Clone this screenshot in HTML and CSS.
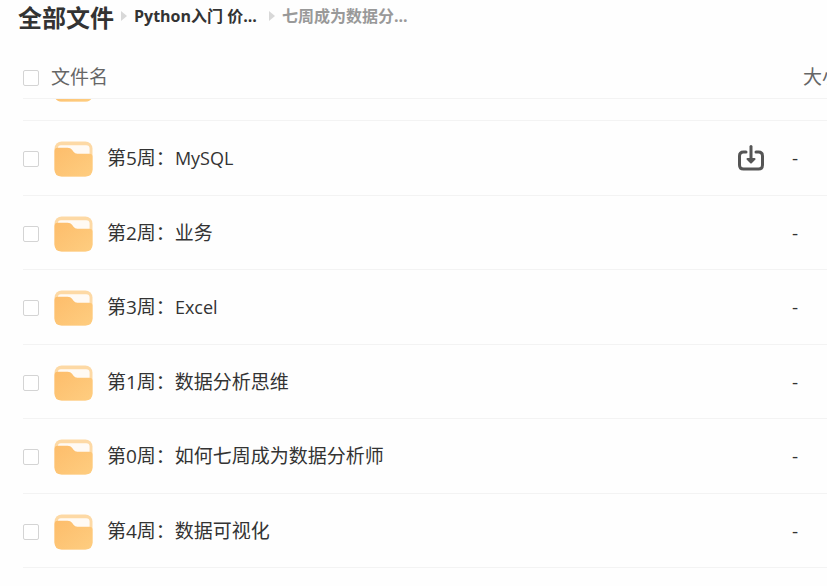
FILE: index.html
```html
<!DOCTYPE html>
<html lang="zh-CN">
<head>
    <meta charset="UTF-8">
    <meta name="viewport" content="width=device-width, initial-scale=1.0">
    <title>全部文件</title>
    <link rel="stylesheet" href="styles.css">
</head>
<body>
    <svg class="defs" width="0" height="0" aria-hidden="true">
        <defs>
            <linearGradient id="front" x1="0" y1="0" x2="1" y2="1">
                <stop offset="0" stop-color="#fdbd6b"/>
                <stop offset="1" stop-color="#fecd80"/>
            </linearGradient>
        </defs>
        <symbol id="folder" viewBox="0 0 40 38">
            <rect x="0.5" y="1" width="39" height="36" rx="7.5" fill="#fdd9a5"/>
            <path d="M4 13V8q0-3 3-3H33q3.500 0 3.500 3.500V16H4z" fill="#fffaf4"/>
            <path d="M0.500 11Q0.500 7.500 4 7.500H14Q17 7.500 18.500 9.500L20 11.500Q21.500 13.500 24 13.500H36.500Q39.500 13.500 39.500 16.500V29.500Q39.500 37 32 37H8Q0.500 37 0.500 29.500z" fill="url(#front)"/>
        </symbol>
    </svg>

    <nav class="breadcrumb">
        <a class="root" href="#">全部文件</a>
        <span class="arrow"></span>
        <a class="parent" href="#">Python入门 价...</a>
        <span class="arrow"></span>
        <span class="current">七周成为数据分...</span>
    </nav>

    <table class="files">
        <thead>
            <tr>
                <th class="check"><input type="checkbox" aria-label="全选"></th>
                <th class="title">文件名</th>
                <th class="size">大小</th>
            </tr>
        </thead>
        <tbody>
            <tr class="scrolled">
                <td class="icon"><svg class="folder"><use href="#folder"/></svg></td>
            </tr>
            <tr>
                <td class="check"><input type="checkbox" id="f5"></td>
                <td class="icon"><svg class="folder"><use href="#folder"/></svg></td>
                <td class="name"><label for="f5">第5周：<span class="latin">MySQL</span></label></td>
                <td class="action">
                    <button type="button" aria-label="下载">
                        <svg width="28" height="28" viewBox="0 0 28 28" fill="none" stroke="#555" stroke-width="3" stroke-linecap="round" stroke-linejoin="round">
                            <path d="M9 8H6.500Q2.500 8 2.500 12V21Q2.500 25 6.500 25H21.500Q25.500 25 25.500 21V12Q25.500 8 21.500 8H19"/>
                            <path d="M14 2.500V15"/>
                            <path d="M10.500 15H17.500L14 18.500z" fill="#555" stroke-width="2"/>
                        </svg>
                    </button>
                </td>
                <td class="size">-</td>
            </tr>
            <tr>
                <td class="check"><input type="checkbox" id="f2"></td>
                <td class="icon"><svg class="folder"><use href="#folder"/></svg></td>
                <td class="name"><label for="f2">第2周：业务</label></td>
                <td class="size">-</td>
            </tr>
            <tr>
                <td class="check"><input type="checkbox" id="f3"></td>
                <td class="icon"><svg class="folder"><use href="#folder"/></svg></td>
                <td class="name"><label for="f3">第3周：<span class="latin">Excel</span></label></td>
                <td class="size">-</td>
            </tr>
            <tr>
                <td class="check"><input type="checkbox" id="f1"></td>
                <td class="icon"><svg class="folder"><use href="#folder"/></svg></td>
                <td class="name"><label for="f1">第1周：数据分析思维</label></td>
                <td class="size">-</td>
            </tr>
            <tr>
                <td class="check"><input type="checkbox" id="f0"></td>
                <td class="icon"><svg class="folder"><use href="#folder"/></svg></td>
                <td class="name"><label for="f0">第0周：如何七周成为数据分析师</label></td>
                <td class="size">-</td>
            </tr>
            <tr>
                <td class="check"><input type="checkbox" id="f4"></td>
                <td class="icon"><svg class="folder"><use href="#folder"/></svg></td>
                <td class="name"><label for="f4">第4周：数据可视化</label></td>
                <td class="size">-</td>
            </tr>
        </tbody>
    </table>
</body>
</html>
```
FILE: styles.css
```css
* {
    box-sizing: border-box;
}
body {
    margin: 0;
    overflow: hidden;
    background-color: #fefefe;
    color: #333;
    font-family: "Open Sans", "Noto Sans CJK SC", sans-serif;
    font-size: 19px;
    white-space: nowrap;
}
.defs {
    position: absolute;
}
.breadcrumb {
    display: flex;
    align-items: center;
    height: 36px;
    padding-left: 18px;
    font-size: 16px;
    line-height: 24px;
    font-weight: bold;
}
.breadcrumb a {
    color: #333;
    text-decoration: none;
}
.breadcrumb .root {
    font-size: 24px;
}
.breadcrumb .parent,
.breadcrumb .current {
    padding-bottom: 4px;
}
.breadcrumb .current {
    color: #999;
}
.arrow {
    margin: 0 7px 4px;
    border-left: 6px solid #d8d8d8;
    border-top: 5px solid transparent;
    border-bottom: 5px solid transparent;
}
.parent + .arrow {
    margin-left: 12px;
}

/* file list */
.files,
.files thead,
.files tbody {
    display: block;
}
.files {
    padding: 20px 0 0 23px;
}
.files tr {
    display: flex;
    align-items: center;
    height: 74px;
    border-bottom: 1px solid #f3f3f3;
}
.files tbody tr:nth-child(even) {
    height: 75px;
}
.files thead tr {
    height: 43px;
}
.files th,
.files td {
    padding: 0;
    text-align: left;
    line-height: 28px;
    font-weight: normal;
}
.files th {
    color: #666;
}
.files .check,
.files .icon {
    display: flex;
    padding-top: 2px;
}
.files tbody .scrolled {
    align-items: flex-end;
    height: 22px;
    padding: 0 0 17px 31px;
    overflow: hidden;
}
.check {
    width: 31px;
}
th.check {
    width: 28px;
}
.check input {
    appearance: none;
    width: 16px;
    height: 16px;
    margin: 0;
    border: 1px solid #d4d4d4;
    border-radius: 2px;
    background-color: #fff;
}
.icon {
    width: 53px;
}
.folder {
    width: 39px;
    height: 38px;
}
.title,
.name {
    flex: 1;
}
.latin {
    font-size: 18px;
}
.action {
    display: flex;
    margin-right: 27px;
}
.action button {
    display: flex;
    padding: 0;
    border: none;
    background: none;
    cursor: pointer;
}
td.size {
    width: 35px;
}
th.size {
    width: 24px;
}
```
